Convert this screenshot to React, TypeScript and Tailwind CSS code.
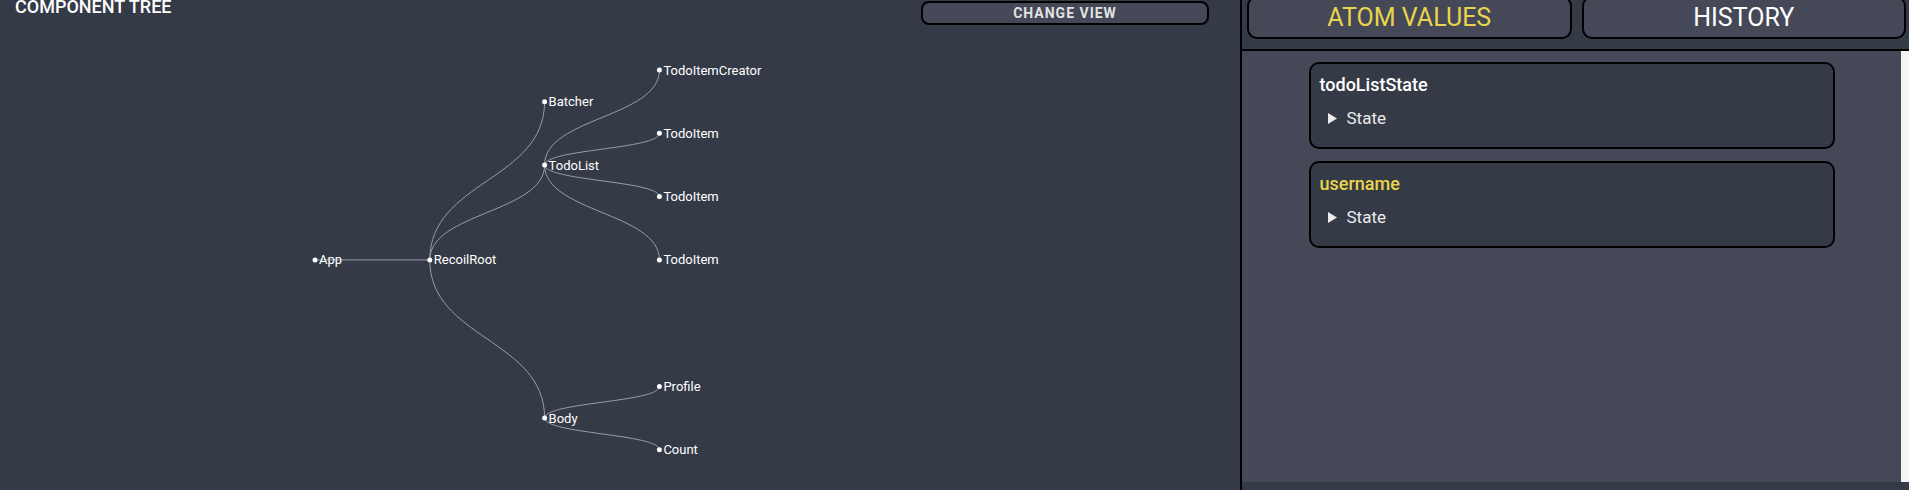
type TreeNode = { id: string; name: string; x: number; y: number; parent?: string };

/** Node positions for the component tree (page coordinates). */
const NODES: TreeNode[] = [
  { id: "app", name: "App", x: 315, y: 259.9 },
  { id: "root", name: "RecoilRoot", x: 429.8, y: 259.9, parent: "app" },
  { id: "batcher", name: "Batcher", x: 544.6, y: 101.7, parent: "root" },
  { id: "todolist", name: "TodoList", x: 544.6, y: 165, parent: "root" },
  { id: "body", name: "Body", x: 544.6, y: 418, parent: "root" },
  { id: "creator", name: "TodoItemCreator", x: 659.4, y: 70, parent: "todolist" },
  { id: "item1", name: "TodoItem", x: 659.4, y: 133.3, parent: "todolist" },
  { id: "item2", name: "TodoItem", x: 659.4, y: 196.6, parent: "todolist" },
  { id: "item3", name: "TodoItem", x: 659.4, y: 259.9, parent: "todolist" },
  { id: "profile", name: "Profile", x: 659.4, y: 386.5, parent: "body" },
  { id: "count", name: "Count", x: 659.4, y: 449.8, parent: "body" },
];

const ATOMS = [
  { key: "todoListState", active: false },
  { key: "username", active: true },
];

function linkPath(s: TreeNode, t: TreeNode) {
  const my = (s.y + t.y) / 2;
  return `M${s.x},${s.y}C${s.x},${my} ${t.x},${my} ${t.x},${t.y}`;
}

function ComponentTree() {
  const byId = Object.fromEntries(NODES.map((n) => [n.id, n]));
  return (
    <svg viewBox="0 26 1240 464" className="block h-[464px] w-[1240px]">
      {NODES.filter((n) => n.parent).map((n) => (
        <path key={n.id} d={linkPath(byId[n.parent!], n)} fill="none" stroke="#9a9ca6" strokeWidth={1} />
      ))}
      {NODES.map((n) => (
        <g key={n.id} transform={`translate(${n.x},${n.y})`}>
          <circle r={2.5} fill="#ffffff" />
          <text x={4} dy="0.35em" fill="#ffffff" fontSize={13} fontFamily="Roboto, sans-serif">
            {n.name}
          </text>
        </g>
      ))}
    </svg>
  );
}

function AtomCard({ name, active }: { name: string; active: boolean }) {
  return (
    <div className="mx-auto h-[87px] w-[526px] rounded-[10px] border-2 border-black bg-[#353a47] pl-[9px] pt-[7px]">
      <div className={`text-[18px] font-medium leading-[27px] ${active ? "text-[#e9d54c]" : "text-white"}`}>
        {name}
      </div>
      <div className="mt-[8px] flex items-center pl-[8px] text-[17px] leading-[25px] text-[#ececec]">
        <svg width="9" height="11" viewBox="0 0 9 11" className="mr-[10px]">
          <polygon points="0,0 9,5.5 0,11" fill="#ececec" />
        </svg>
        State
      </div>
    </div>
  );
}

export default function App() {
  return (
    <div className="flex h-[490px] w-[1909px] overflow-hidden bg-[#353a47] font-['Roboto',sans-serif]">
      {/* Component tree */}
      <div className="flex w-[1240px] flex-col">
        <div className="flex h-[26px] items-start justify-between pl-[15px] pr-[31px]">
          <h2 className="text-[18px] font-medium leading-[14px] text-white">COMPONENT TREE</h2>
          <button className="mt-[1px] h-[24px] w-[288px] rounded-[8px] border-2 border-black bg-[#444857] text-[14px] font-bold leading-none tracking-[1px] text-[#e2e2e2]">
            CHANGE VIEW
          </button>
        </div>
        <ComponentTree />
      </div>

      {/* Atom panel */}
      <div className="flex w-[669px] flex-col border-l-2 border-black">
        <div className="flex h-[51px] items-start gap-[10px] border-b-2 border-black pl-[5px] pr-[3px]">
          <button className="-mt-[4px] h-[43px] flex-1 rounded-[10px] border-2 border-black bg-[#444857] text-[25px] leading-none text-[#e9d54c]">
            ATOM VALUES
          </button>
          <button className="-mt-[4px] h-[43px] flex-1 rounded-[10px] border-2 border-black bg-[#444857] text-[25px] leading-none text-white">
            HISTORY
          </button>
        </div>
        <div className="flex h-[431px]">
          <div className="flex flex-1 flex-col gap-[12px] bg-[#444857] pt-[11px]">
            {ATOMS.map((a) => (
              <AtomCard key={a.key} name={a.key} active={a.active} />
            ))}
          </div>
          <div className="w-[8px] bg-[#f4f4f4]" />
        </div>
        <div className="h-[8px]" />
      </div>
    </div>
  );
}
